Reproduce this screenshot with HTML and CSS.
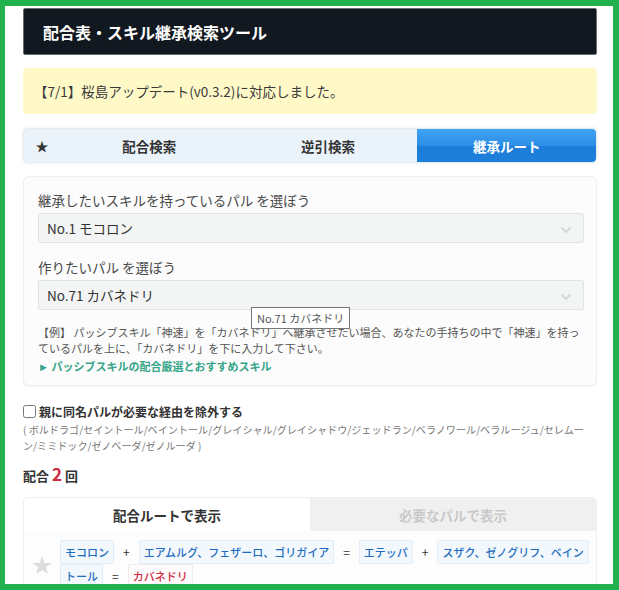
FILE: index.html
```html
<!DOCTYPE html>
<html lang="ja">
<head>
  <meta charset="UTF-8" />
  <meta name="viewport" content="width=device-width, initial-scale=1.0"/>
  <title>配合表・スキル継承検索ツール</title>
  <link rel="stylesheet" href="styles.css">
</head>
<body>

  <div class="frame">
    <div class="page">

      <header class="site-header">
        <h1>配合表・スキル継承検索ツール</h1>
      </header>

      <div class="notice">【7/1】桜島アップデート(v0.3.2)に対応しました。</div>

      <nav class="tabs">
        <span class="tab-star">★</span>
        <a class="tab">配合検索</a>
        <a class="tab">逆引検索</a>
        <a class="tab active">継承ルート</a>
      </nav>

      <section class="panel">
        <div class="field-label">継承したいスキルを持っているパル を選ぼう</div>
        <div class="select">
          <span>No.1 モコロン</span>
          <svg class="caret" width="12" height="8" viewBox="0 0 12 8"><path d="M1.5 1.5 L6 6 L10.5 1.5" fill="none" stroke="#d6d8d8" stroke-width="2"/></svg>
        </div>

        <div class="field-label">作りたいパル を選ぼう</div>
        <div class="select">
          <span>No.71 カバネドリ</span>
          <svg class="caret" width="12" height="8" viewBox="0 0 12 8"><path d="M1.5 1.5 L6 6 L10.5 1.5" fill="none" stroke="#d6d8d8" stroke-width="2"/></svg>
        </div>

        <p class="hint">【例】 パッシブスキル「神速」を「カバネドリ」へ継承させたい場合、あなたの手持ちの中で「神速」を持っているパルを上に、「カバネドリ」を下に入力して下さい。</p>
        <a class="guide-link">► パッシブスキルの配合厳選とおすすめスキル</a>

        <div class="tooltip">No.71 カバネドリ</div>
      </section>

      <label class="exclude"><input type="checkbox">親に同名パルが必要な経由を除外する</label>
      <p class="exclude-list">( ボルドラゴ/セイントール/ベイントール/グレイシャル/グレイシャドウ/ジェッドラン/ベラノワール/ベラルージュ/セレムーン/ミミドック/ゼノベーダ/ゼノルーダ )</p>

      <h2 class="count">配合 <span class="num">2</span> 回</h2>

      <div class="results">
        <div class="result-tabs">
          <span class="rtab active">配合ルートで表示</span>
          <span class="rtab">必要なパルで表示</span>
        </div>
        <div class="route">
          <span class="route-star">★</span>
          <div class="route-body">
            <span class="chip">モコロン</span><span class="op">+</span><span class="chip">エアムルグ、フェザーロ、ゴリガイア</span><span class="op">=</span><span class="chip">エテッパ</span><span class="op">+</span><span class="chip">スザク、ゼノグリフ、ベイントール</span><span class="op">=</span><span class="chip goal">カバネドリ</span>
          </div>
        </div>
      </div>

    </div>
  </div>

</body>
</html>
```

FILE: styles.css
```css
* {
  box-sizing: border-box;
}

body {
  margin: 0;
  font-family: "Noto Sans CJK JP", "Noto Sans", sans-serif;
  color: #333;
  background: #22b14c;
}

.frame {
  height: 590px;
  border: 6px solid #22b14c;
  border-left-width: 5px;
  background: #fff;
  overflow: hidden;
}

.page {
  padding: 2px 16px 0 18px;
}

/* ヘッダー */
.site-header {
  background: #121820;
  border: 1px solid #6a6d70;
  border-radius: 2px;
  height: 47px;
  display: flex;
  align-items: center;
  padding-left: 19px;
}

.site-header h1 {
  margin: 0;
  color: #fff;
  font-size: 16px;
  font-weight: 700;
}

/* お知らせ */
.notice {
  margin-top: 13px;
  height: 46px;
  background: #fff9c8;
  border-radius: 4px;
  padding-left: 11px;
  display: flex;
  align-items: center;
  font-size: 13.5px;
  color: #3a3a3a;
}

/* タブ */
.tabs {
  margin-top: 14px;
  height: 35px;
  display: flex;
  background: #ebf3fa;
  border: 1px solid #e4ebf1;
  border-radius: 5px;
  overflow: hidden;
  box-shadow: 0 0 0 2px #f7f9fb;
}

.tab-star {
  width: 36px;
  display: flex;
  align-items: center;
  justify-content: center;
  font-size: 13px;
  color: #333;
}

.tab {
  flex: 1;
  display: flex;
  align-items: center;
  justify-content: center;
  font-size: 13.5px;
  font-weight: 700;
  color: #333;
  cursor: pointer;
}

.tab.active {
  color: #fff;
  background: linear-gradient(#3fa2f2 0%, #2d8ee6 50%, #1c7cd9 52%, #1f80dc 100%);
}

/* 入力パネル */
.panel {
  position: relative;
  margin-top: 13px;
  background: #fcfcfc;
  border: 1px solid #eeeeee;
  border-radius: 6px;
  box-shadow: 0 1px 2px rgba(0, 0, 0, 0.05);
  padding: 13px 14px 11px;
}

.field-label {
  font-size: 13.5px;
  line-height: 20px;
  color: #484848;
}

.select {
  margin: 3px 0 14px;
  height: 30px;
  width: 546px;
  background: #f3f5f5;
  border: 1px solid #e1e4e4;
  border-radius: 2px;
  display: flex;
  align-items: center;
  justify-content: space-between;
  padding: 0 11px 0 8px;
  font-size: 13.5px;
  color: #333;
}

.select .caret {
  margin-top: 4px;
}

.hint {
  margin: 10px 0 0;
  font-size: 11px;
  line-height: 16px;
  color: #555;
}

.guide-link {
  display: block;
  margin-top: 2px;
  font-size: 11px;
  line-height: 16px;
  font-weight: 700;
  color: #35a58a;
  cursor: pointer;
}

.tooltip {
  position: absolute;
  left: 227px;
  top: 130px;
  padding: 3px 5px;
  background: #fff;
  border: 1px solid #767676;
  font-size: 11px;
  line-height: 14px;
  color: #555;
  white-space: nowrap;
}

/* 除外チェック */
.exclude {
  display: flex;
  align-items: center;
  margin-top: 15px;
  height: 20px;
  font-size: 12px;
  font-weight: 700;
  color: #333;
}

.exclude input {
  margin: 0 3px 0 0;
  width: 13px;
  height: 13px;
}

.exclude-list {
  margin: 1px 0 0;
  padding-right: 8px;
  font-size: 10.1px;
  line-height: 16px;
  color: #777;
}

.count {
  margin: 10px 0 0;
  font-size: 13px;
  line-height: 20px;
  font-weight: 700;
  color: #333;
}

.count .num {
  font-size: 17px;
  color: #d0283c;
}

/* 結果 */
.results {
  margin-top: 11px;
  border: 1px solid #efefef;
  border-radius: 5px 5px 0 0;
  background: #fdfdfd;
}

.result-tabs {
  display: flex;
  height: 33px;
}

.rtab {
  flex: 1;
  display: flex;
  align-items: center;
  justify-content: center;
  font-size: 13.5px;
  font-weight: 700;
  color: #c9c9c9;
  background: #f0f0f0;
  border-top-right-radius: 5px;
}

.rtab.active {
  color: #333;
  background: #fff;
  border-radius: 5px 0 0 0;
}

.route {
  display: flex;
  align-items: center;
  padding: 9px 10px 8px 0;
}

.route-star {
  width: 36px;
  text-align: center;
  font-size: 20px;
  color: #dcdcdc;
}

.route-body {
  flex: 1;
  font-size: 11px;
  line-height: 24px;
}

.chip {
  padding: 3px 4px;
  background: #f3f8fd;
  border: 1px solid #e2edf8;
  border-radius: 2px;
  color: #1d6cc0;
  font-weight: 500;
  box-decoration-break: clone;
  -webkit-box-decoration-break: clone;
}

.chip.goal {
  color: #d2283b;
  background: #fdfbfb;
  border-color: #f1e9ea;
}

.op {
  margin: 0 9px;
  font-size: 12px;
  color: #333;
}
```
